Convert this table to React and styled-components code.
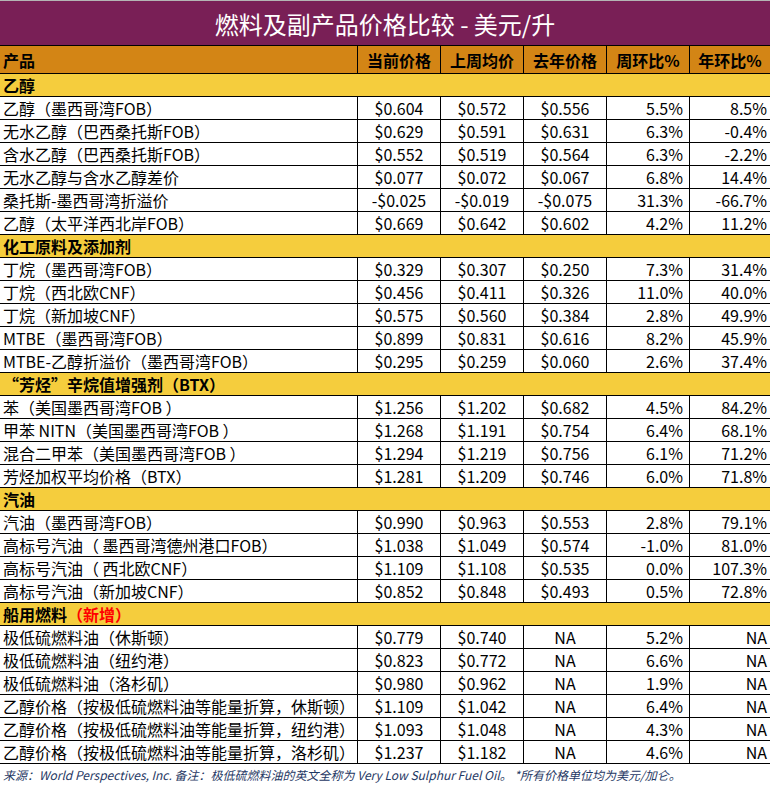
import React from "react";
import styled, { createGlobalStyle } from "styled-components";

const Global = createGlobalStyle`
  html, body { margin: 0; padding: 0; background: #ffffff; }
  body { font-family: "Noto Sans CJK SC", "Noto Sans", sans-serif; color: #000; }
`;

const Page = styled.div`
  width: 770px;
  height: 785px;
  overflow: hidden;
  border-top: 1px solid #b4b4b4;
  box-sizing: border-box;
`;

const TitleBar = styled.div`
  height: 44px;
  background: #791f56;
  color: #ffffff;
  display: flex;
  align-items: center;
  justify-content: center;
  font-size: 24px;
  line-height: 1;
  font-weight: 400;
  padding-top: 1px;
  box-sizing: border-box;
`;

const Table = styled.div`
  border-top: 1px solid #000;
  display: flex;
  flex-direction: column;
`;

const Row = styled.div`
  display: grid;
  grid-template-columns: 357px 83px 83px 83px 83px 81px;
  height: ${(p) => (p.$header ? 28 : 23)}px;
  box-sizing: border-box;
  border-bottom: 1px solid #000;
  background: ${(p) => (p.$header ? "#d38515" : "#ffffff")};
  font-weight: ${(p) => (p.$header ? 700 : 400)};
  font-size: 16px;
`;

const SectionRow = styled.div`
  height: 23px;
  box-sizing: border-box;
  border-bottom: 1px solid #000;
  background: #f5cd3d;
  display: flex;
  align-items: center;
  padding-left: 3px;
  font-size: 16px;
  font-weight: 700;
  line-height: 1;
`;

const Red = styled.span`
  color: #ff0000;
`;

const Cell = styled.div`
  display: flex;
  align-items: center;
  justify-content: ${(p) =>
    p.$align === "right" ? "flex-end" : p.$align === "center" ? "center" : "flex-start"};
  border-left: ${(p) => (p.$first ? "none" : "1px solid #000")};
  padding: 0 ${(p) => p.$pr ?? 0}px 0 ${(p) => p.$pl ?? 0}px;
  white-space: nowrap;
  overflow: hidden;
  line-height: 1;
  box-sizing: border-box;
`;

const Footer = styled.div`
  height: 22px;
  display: flex;
  align-items: center;
  padding-left: 3px;
  font-size: 12px;
  font-style: italic;
  color: #1f3864;
  white-space: nowrap;
  line-height: 1;
`;

const sections = [
  {
    title: "乙醇",
    rows: [
      ["乙醇（墨西哥湾FOB）", "$0.604", "$0.572", "$0.556", "5.5%", "8.5%"],
      ["无水乙醇（巴西桑托斯FOB）", "$0.629", "$0.591", "$0.631", "6.3%", "-0.4%"],
      ["含水乙醇（巴西桑托斯FOB）", "$0.552", "$0.519", "$0.564", "6.3%", "-2.2%"],
      ["无水乙醇与含水乙醇差价", "$0.077", "$0.072", "$0.067", "6.8%", "14.4%"],
      ["桑托斯-墨西哥湾折溢价", "-$0.025", "-$0.019", "-$0.075", "31.3%", "-66.7%"],
      ["乙醇（太平洋西北岸FOB）", "$0.669", "$0.642", "$0.602", "4.2%", "11.2%"],
    ],
  },
  {
    title: "化工原料及添加剂",
    rows: [
      ["丁烷（墨西哥湾FOB）", "$0.329", "$0.307", "$0.250", "7.3%", "31.4%"],
      ["丁烷（西北欧CNF）", "$0.456", "$0.411", "$0.326", "11.0%", "40.0%"],
      ["丁烷（新加坡CNF）", "$0.575", "$0.560", "$0.384", "2.8%", "49.9%"],
      ["MTBE（墨西哥湾FOB）", "$0.899", "$0.831", "$0.616", "8.2%", "45.9%"],
      ["MTBE-乙醇折溢价（墨西哥湾FOB）", "$0.295", "$0.259", "$0.060", "2.6%", "37.4%"],
    ],
  },
  {
    title: "“芳烃”辛烷值增强剂（BTX）",
    rows: [
      ["苯（美国墨西哥湾FOB ）", "$1.256", "$1.202", "$0.682", "4.5%", "84.2%"],
      ["甲苯 NITN（美国墨西哥湾FOB ）", "$1.268", "$1.191", "$0.754", "6.4%", "68.1%"],
      ["混合二甲苯（美国墨西哥湾FOB ）", "$1.294", "$1.219", "$0.756", "6.1%", "71.2%"],
      ["芳烃加权平均价格（BTX）", "$1.281", "$1.209", "$0.746", "6.0%", "71.8%"],
    ],
  },
  {
    title: "汽油",
    rows: [
      ["汽油（墨西哥湾FOB）", "$0.990", "$0.963", "$0.553", "2.8%", "79.1%"],
      ["高标号汽油（ 墨西哥湾德州港口FOB）", "$1.038", "$1.049", "$0.574", "-1.0%", "81.0%"],
      ["高标号汽油（ 西北欧CNF）", "$1.109", "$1.108", "$0.535", "0.0%", "107.3%"],
      ["高标号汽油（新加坡CNF）", "$0.852", "$0.848", "$0.493", "0.5%", "72.8%"],
    ],
  },
  {
    title: "船用燃料",
    extra: "（新增）",
    rows: [
      ["极低硫燃料油（休斯顿）", "$0.779", "$0.740", "NA", "5.2%", "NA"],
      ["极低硫燃料油（纽约港）", "$0.823", "$0.772", "NA", "6.6%", "NA"],
      ["极低硫燃料油（洛杉矶）", "$0.980", "$0.962", "NA", "1.9%", "NA"],
      ["乙醇价格（按极低硫燃料油等能量折算，休斯顿）", "$1.109", "$1.042", "NA", "6.4%", "NA"],
      ["乙醇价格（按极低硫燃料油等能量折算，纽约港）", "$1.093", "$1.048", "NA", "4.3%", "NA"],
      ["乙醇价格（按极低硫燃料油等能量折算，洛杉矶）", "$1.237", "$1.182", "NA", "4.6%", "NA"],
    ],
  },
];

const headers = ["产品", "当前价格", "上周均价", "去年价格", "周环比%", "年环比%"];

function DataRow({ r }) {
  return (
    <Row>
      <Cell $first $pl={3}>{r[0]}</Cell>
      <Cell $align="center">{r[1]}</Cell>
      <Cell $align="center">{r[2]}</Cell>
      <Cell $align="center">{r[3]}</Cell>
      <Cell $align="right" $pr={6}>{r[4]}</Cell>
      <Cell $align="right" $pr={3}>{r[5]}</Cell>
    </Row>
  );
}

export default function App() {
  return (
    <>
      <Global />
      <Page>
        <TitleBar>燃料及副产品价格比较 - 美元/升</TitleBar>
        <Table>
          <Row $header>
            {headers.map((h, i) => (
              <Cell key={h} $first={i === 0} $pl={i === 0 ? 3 : 0} $align={i === 0 ? "left" : "center"}>
                {h}
              </Cell>
            ))}
          </Row>
          {sections.map((s) => (
            <React.Fragment key={s.title}>
              <SectionRow>
                {s.title}
                {s.extra && <Red>{s.extra}</Red>}
              </SectionRow>
              {s.rows.map((r) => (
                <DataRow key={r[0]} r={r} />
              ))}
            </React.Fragment>
          ))}
        </Table>
        <Footer>
          来源：World Perspectives, Inc. 备注：极低硫燃料油的英文全称为 Very Low Sulphur Fuel Oil。 *所有价格单位均为美元/加仑。
        </Footer>
      </Page>
    </>
  );
}
